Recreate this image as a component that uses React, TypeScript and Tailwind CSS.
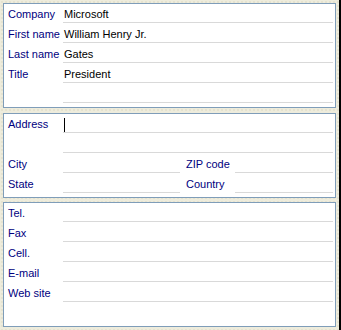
import React from "react";

const font = "font-['Liberation_Sans',Arial,sans-serif] text-[11px] leading-[13px]";

function Row({ label, value, caret }: { label?: string; value?: string; caret?: boolean }) {
  return (
    <div className="flex h-[20px] items-stretch pr-[2px]">
      <div className="w-[59px] shrink-0 pl-[4px] pb-[2px] flex items-end text-[#000080] whitespace-nowrap">
        {label}
      </div>
      <div className="flex-1 border-b border-[#d9d9d9] pb-px pl-px flex items-end text-black whitespace-nowrap">
        {caret ? <span className="block w-px h-[14px] bg-black mb-[-1px]" /> : value}
      </div>
    </div>
  );
}

function SplitRow({ l1, l2 }: { l1: string; l2: string }) {
  return (
    <div className="flex h-[20px] items-stretch pr-[2px]">
      <div className="w-[59px] shrink-0 pl-[4px] pb-[2px] flex items-end text-[#000080]">{l1}</div>
      <div className="w-[117px] shrink-0 border-b border-[#d9d9d9]" />
      <div className="w-[55px] shrink-0 pl-[6px] pb-[2px] flex items-end text-[#000080] whitespace-nowrap">{l2}</div>
      <div className="flex-1 border-b border-[#d9d9d9]" />
    </div>
  );
}

function Panel({ children, className = "" }: { children: React.ReactNode; className?: string }) {
  return (
    <div className={"bg-white border border-[#7f9db9] " + className}>
      <div className="-mt-px">{children}</div>
    </div>
  );
}

export default function App() {
  return (
    <div className={"flex h-[330px] w-[341px] " + font}>
      <div className="w-[339px] h-full p-[3px] flex flex-col bg-[#eeecdc] bg-[radial-gradient(circle,#d9d6c2_0.6px,transparent_0.8px)] bg-[length:4px_4px]">
        <Panel className="h-[105px] shrink-0">
          <Row label="Company" value="Microsoft" />
          <Row label="First name" value="William Henry Jr." />
          <Row label="Last name" value="Gates" />
          <Row label="Title" value="President" />
          <Row />
        </Panel>
        <Panel className="h-[85px] shrink-0 mt-[5px]">
          <Row label="Address" caret />
          <Row />
          <SplitRow l1="City" l2="ZIP code" />
          <SplitRow l1="State" l2="Country" />
        </Panel>
        <Panel className="flex-1 mt-[4px]">
          <Row label="Tel." />
          <Row label="Fax" />
          <Row label="Cell." />
          <Row label="E-mail" />
          <Row label="Web site" />
        </Panel>
      </div>
      <div className="w-[2px] h-full bg-black" />
    </div>
  );
}
